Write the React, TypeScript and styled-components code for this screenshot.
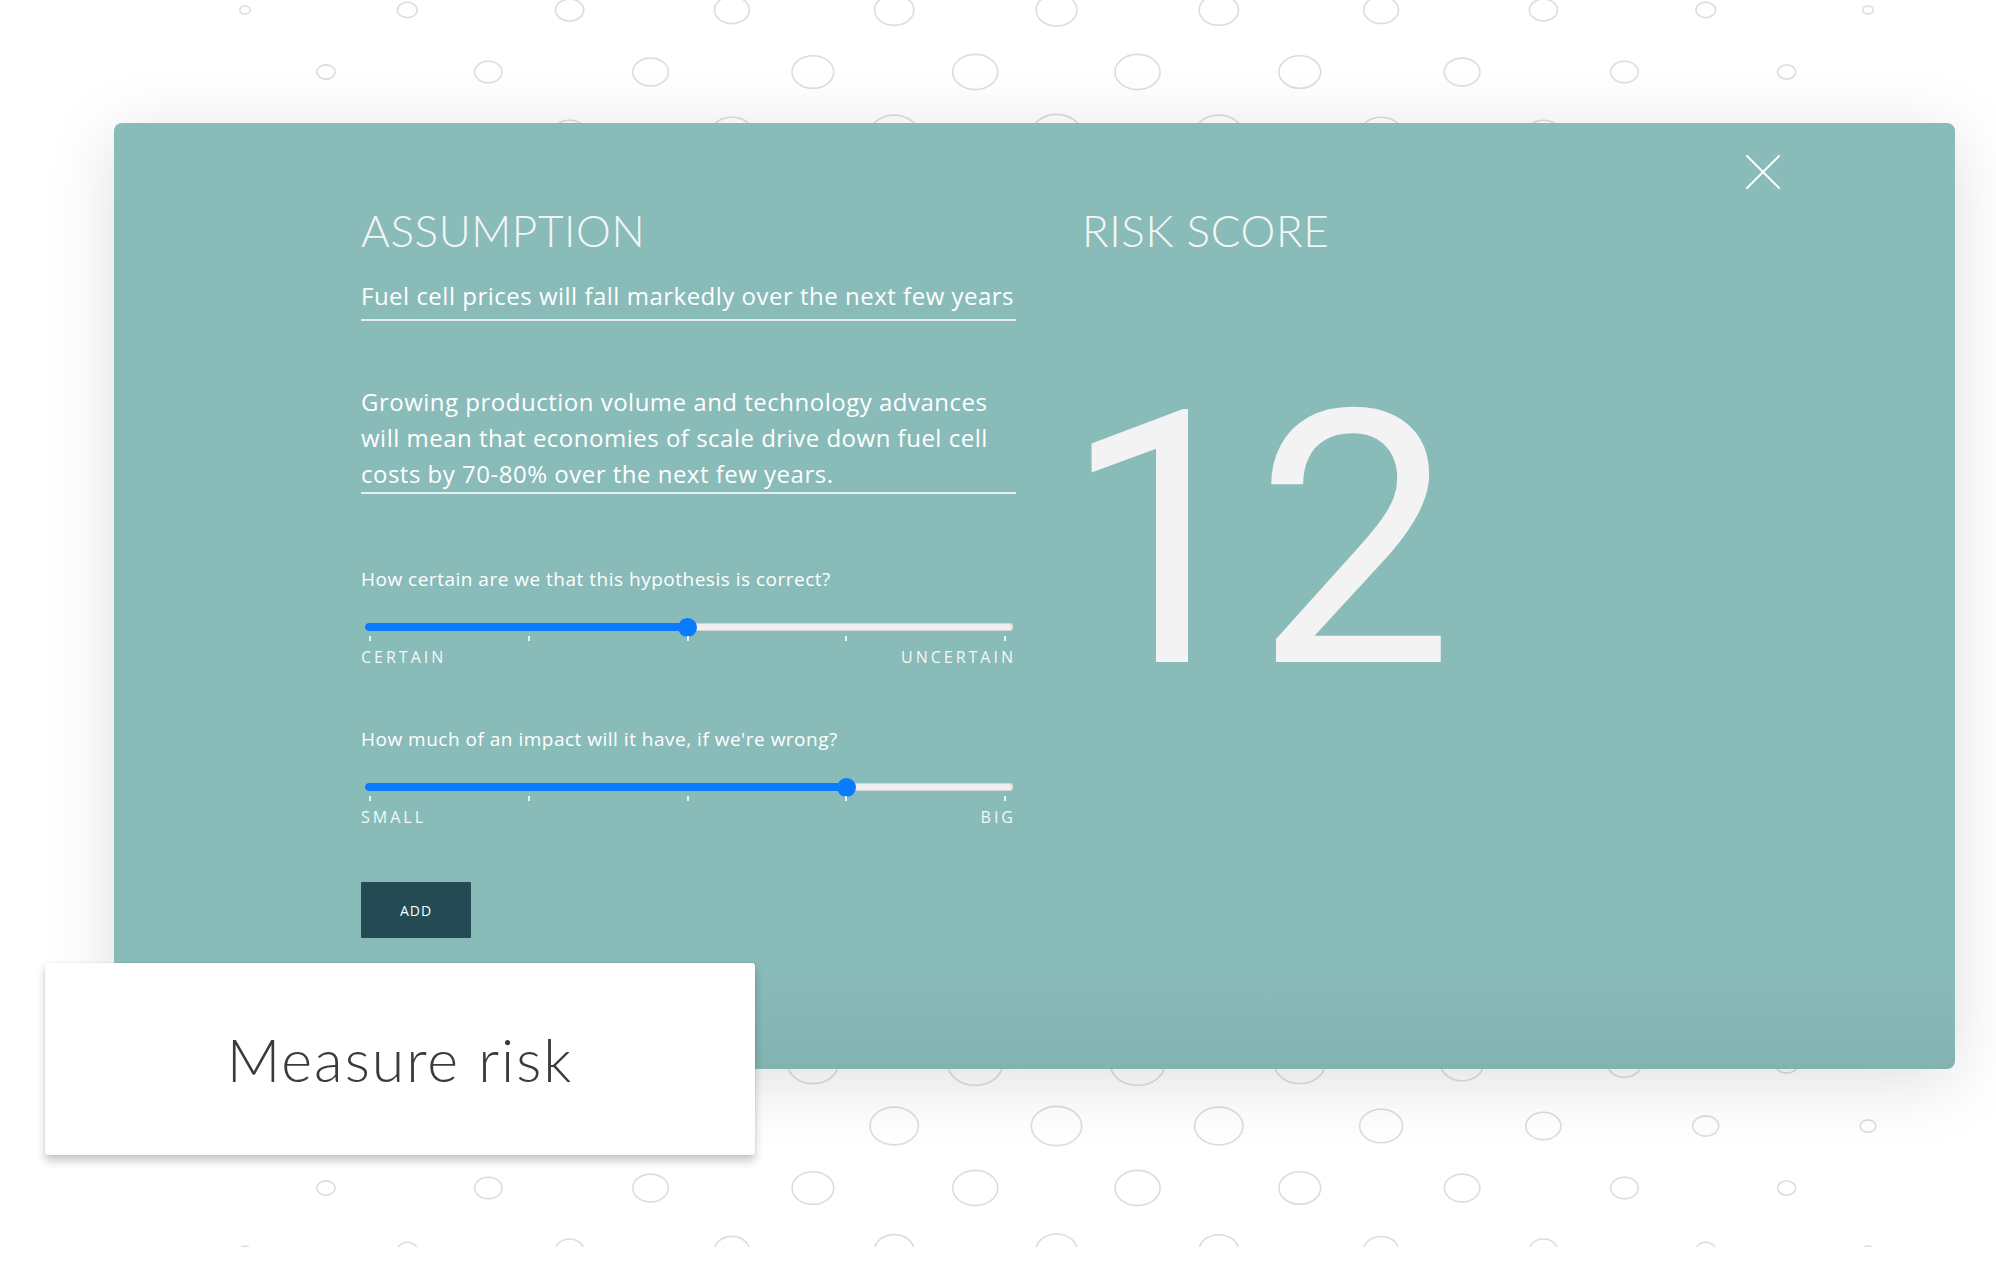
import React from "react"
import styled, { createGlobalStyle } from "styled-components"

const GlobalStyle = createGlobalStyle`
  html, body {
    margin: 0;
    padding: 0;
    background: #ffffff;
  }
  body {
    font-family: "Open Sans", "Liberation Sans", sans-serif;
  }
`

const PAGE_W = 1996
const PAGE_H = 1262

// dotted background: rings grow toward the middle of the page
const buildRings = () => {
  const cx = 1056
  const cy = 630
  const rings: { x: number; y: number; rx: number; ry: number }[] = []
  for (let k = 0; k <= 20; k++) {
    const y = 10 + 62 * k
    const shifted = k % 2 === 0
    const count = shifted ? 11 : 10
    const x0 = shifted ? 245 : 326
    for (let j = 0; j < count; j++) {
      const x = x0 + 162.3 * j
      const d = Math.hypot(x - cx, y - cy)
      const w = 88 - 0.076 * d
      if (w < 6) continue
      rings.push({ x, y, rx: w / 2, ry: w * 0.39 })
    }
  }
  return rings
}

const rings = buildRings()

type SliderProps = {
  question: string
  value: number
  low: string
  high: string
}

const RiskSlider: React.FC<SliderProps> = ({ question, value, low, high }) => {
  const pos = 9 + 635 * value
  return (
    <S.SliderBlock>
      <S.Question>{question}</S.Question>
      <S.SliderArea>
        <S.Track>
          <S.Fill style={{ width: pos - 4 }} />
        </S.Track>
        <S.Thumb style={{ left: pos }} />
        <S.Ticks>
          {[0, 1, 2, 3, 4].map((i) => (
            <S.Tick key={i} />
          ))}
        </S.Ticks>
      </S.SliderArea>
      <S.Labels>
        <span>{low}</span>
        <span>{high}</span>
      </S.Labels>
    </S.SliderBlock>
  )
}

export default function App() {
  return (
    <>
      <GlobalStyle />
      <S.Page>
        <S.Pattern width={PAGE_W} height={1247} viewBox={`0 0 ${PAGE_W} 1247`}>
          {rings.map((r, i) => (
            <ellipse key={i} cx={r.x} cy={r.y} rx={r.rx} ry={r.ry} fill="none" stroke="#dddddd" strokeWidth={1.6} />
          ))}
        </S.Pattern>

        <S.Stage>
          <S.Panel>
            <S.Close aria-label="close">
              <svg width="34" height="34" viewBox="0 0 34 34">
                <path d="M1 1 L33 33 M33 1 L1 33" stroke="#ffffff" strokeWidth="2" strokeLinecap="round" />
              </svg>
            </S.Close>

            <S.Column>
              <S.Heading>ASSUMPTION</S.Heading>
              <S.Field>Fuel cell prices will fall markedly over the next few years</S.Field>
              <S.Description>
                Growing production volume and technology advances will mean that economies of scale drive down fuel cell
                costs by 70-80% over the next few years.
              </S.Description>

              <RiskSlider question="How certain are we that this hypothesis is correct?" value={0.5} low="CERTAIN" high="UNCERTAIN" />
              <RiskSlider question="How much of an impact will it have, if we're wrong?" value={0.75} low="SMALL" high="BIG" />

              <S.AddButton>ADD</S.AddButton>
            </S.Column>

            <S.ScoreColumn>
              <S.Heading>RISK SCORE</S.Heading>
              <S.Score>12</S.Score>
            </S.ScoreColumn>
          </S.Panel>
        </S.Stage>

        <S.Caption>
          <S.CaptionText>Measure risk</S.CaptionText>
        </S.Caption>
      </S.Page>
    </>
  )
}

const S = {
  Page: styled.div`
    position: relative;
    width: ${PAGE_W}px;
    height: ${PAGE_H}px;
    overflow: hidden;
    background: #ffffff;
  `,
  Pattern: styled.svg`
    position: absolute;
    top: 0;
    left: 0;
  `,
  Stage: styled.div`
    position: relative;
    padding: 123px 41px 0 114px;
  `,
  Panel: styled.div`
    position: relative;
    box-sizing: border-box;
    height: 946px;
    display: grid;
    grid-template-columns: 655px 1fr;
    column-gap: 66px;
    padding: 81px 0 0 247px;
    border-radius: 8px;
    background: linear-gradient(to bottom, #89bbb9 0%, #89bbb9 90%, #82b3b1 100%);
    box-shadow: 0 12px 70px rgba(0, 0, 0, 0.13);
  `,
  Close: styled.button`
    position: absolute;
    top: 32px;
    right: 175px;
    width: 34px;
    height: 34px;
    padding: 0;
    border: none;
    background: transparent;
    cursor: pointer;
    svg {
      display: block;
    }
  `,
  Column: styled.div`
    display: flex;
    flex-direction: column;
    align-items: stretch;
  `,
  ScoreColumn: styled.div`
    display: flex;
    flex-direction: column;
    align-items: flex-start;
  `,
  Heading: styled.h2`
    margin: 0;
    font-family: "Lato", "Open Sans", sans-serif;
    font-weight: 300;
    font-size: 44px;
    line-height: 52px;
    letter-spacing: 0.6px;
    color: #f4f6f6;
  `,
  Field: styled.div`
    margin-top: 24px;
    padding-bottom: 7px;
    font-size: 24px;
    line-height: 32px;
    letter-spacing: 0.5px;
    color: #ffffff;
    border-bottom: 2px solid #e4efee;
    white-space: nowrap;
  `,
  Description: styled.p`
    margin: 63px 0 0;
    font-size: 24px;
    line-height: 36px;
    letter-spacing: 0.5px;
    color: #ffffff;
    border-bottom: 2px solid #e4efee;
  `,
  SliderBlock: styled.div`
    display: flex;
    flex-direction: column;
    margin-top: 73px;
    & + & {
      margin-top: 60px;
    }
  `,
  Question: styled.div`
    font-size: 19px;
    line-height: 24px;
    letter-spacing: 0.5px;
    color: #ffffff;
  `,
  SliderArea: styled.div`
    position: relative;
    margin-top: 24px;
    height: 32px;
  `,
  Track: styled.div`
    position: absolute;
    top: 8px;
    left: 4px;
    right: 3px;
    height: 8px;
    border-radius: 4px;
    background: #efefef;
    box-shadow: inset 0 0 0 1px #d4d4d4;
    overflow: hidden;
  `,
  Fill: styled.div`
    height: 100%;
    background: #0a7bff;
  `,
  Thumb: styled.div`
    position: absolute;
    top: 3px;
    width: 19px;
    height: 19px;
    margin-left: -9.5px;
    border-radius: 50%;
    background: #0a7bff;
  `,
  Ticks: styled.div`
    position: absolute;
    top: 21px;
    left: 8px;
    width: 637px;
    display: flex;
    justify-content: space-between;
  `,
  Tick: styled.span`
    width: 2px;
    height: 5px;
    background: #e9f1f1;
  `,
  Labels: styled.div`
    display: flex;
    justify-content: space-between;
    font-size: 16px;
    line-height: 20px;
    letter-spacing: 3px;
    color: #f4f7f7;
  `,
  AddButton: styled.button`
    align-self: flex-start;
    margin-top: 55px;
    width: 110px;
    height: 56px;
    border: none;
    border-radius: 1px;
    background: #244b54;
    color: #ffffff;
    font-family: "Open Sans", sans-serif;
    font-size: 14px;
    letter-spacing: 1px;
    cursor: pointer;
  `,
  Score: styled.div`
    margin: 108px 0 0 -20px;
    font-family: "Roboto", sans-serif;
    font-weight: 400;
    font-size: 354px;
    line-height: 354px;
    letter-spacing: -6px;
    color: #f3f3f3;
  `,
  Caption: styled.div`
    position: absolute;
    left: 45px;
    top: 963px;
    width: 710px;
    height: 192px;
    display: flex;
    align-items: center;
    justify-content: center;
    background: #ffffff;
    border-radius: 3px;
    box-shadow: 0 6px 10px rgba(0, 0, 0, 0.22), 0 0 2px rgba(0, 0, 0, 0.12);
  `,
  CaptionText: styled.div`
    font-family: "Lato", "Open Sans", sans-serif;
    font-weight: 300;
    font-size: 59px;
    color: #3b3b3b;
    letter-spacing: 2px;
  `,
}
